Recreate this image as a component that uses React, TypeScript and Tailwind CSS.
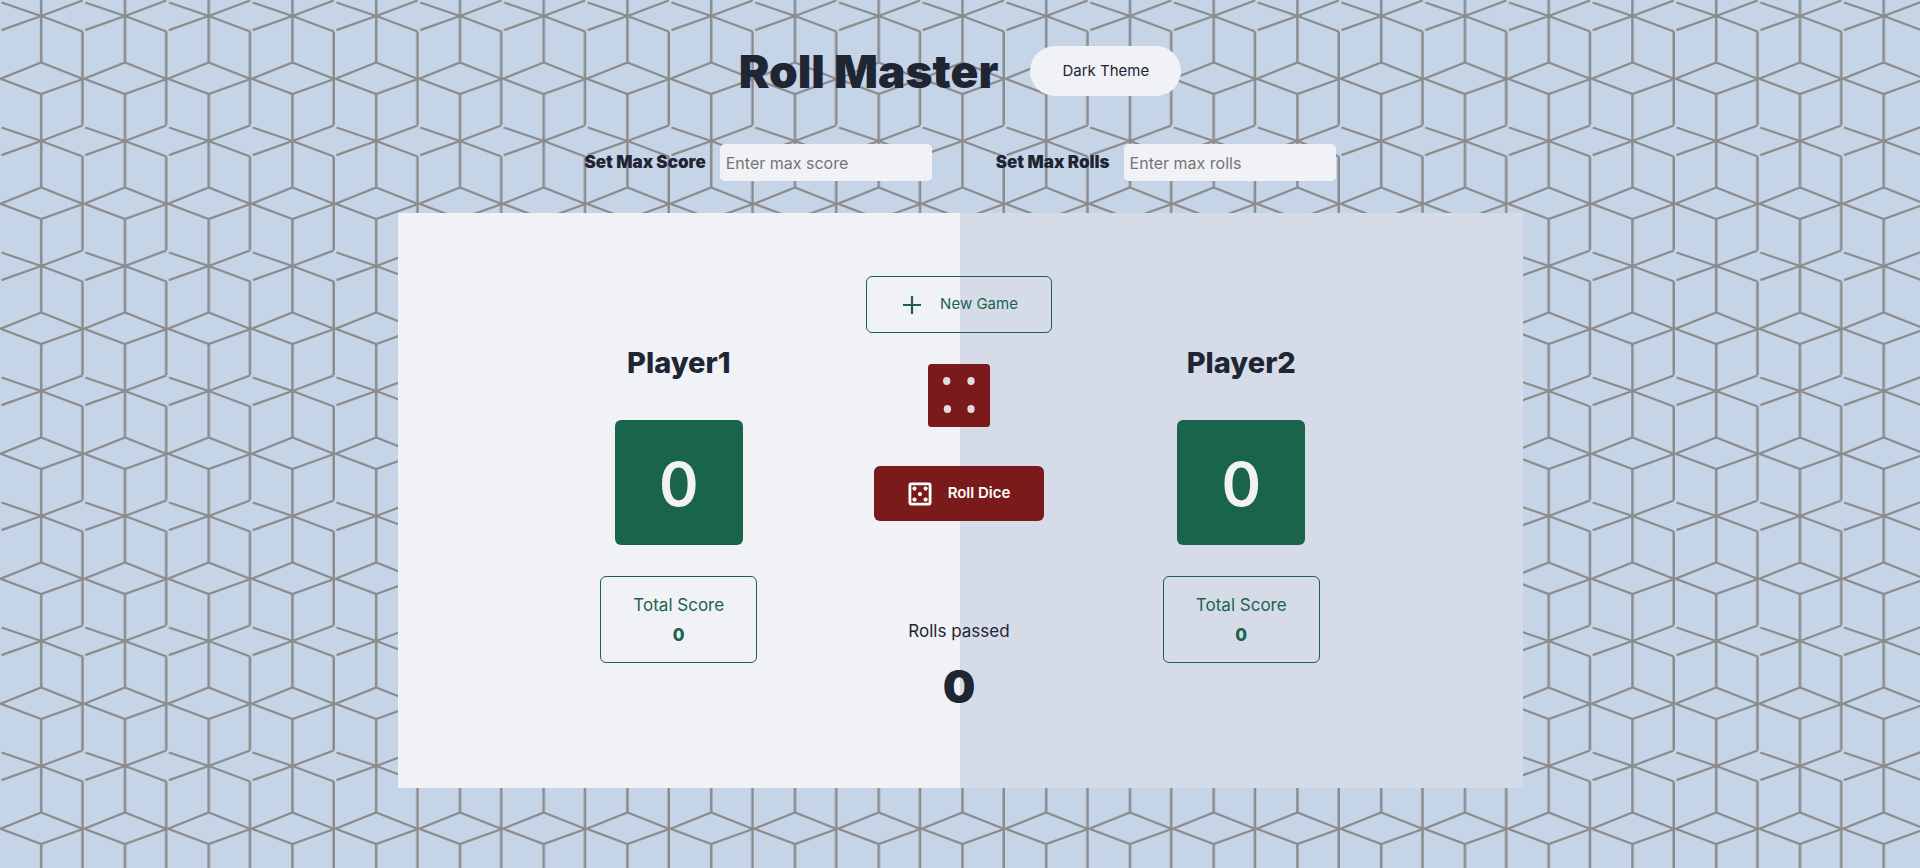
import React, { useState } from "react";

function CubeBackground() {
  return (
    <svg className="absolute inset-0 -z-10 h-full w-full" aria-hidden="true">
      <defs>
        <pattern id="cubes" width="83.75" height="125" patternUnits="userSpaceOnUse">
          <g fill="none" stroke="#8b8b8c" strokeWidth="2.5">
            <path d="M41.2 0V62.5M41.2 94V125M82.5 31.5V125" />
            <path d="M1.5 2.5L41.2 16L82.6 31.5M1.5 30.2L41.2 16L82.6 0.5" strokeWidth="2.3" />
            <path d="M0 79L41.2 62.5L83 79M0 78.5L41.2 94L83 79" strokeWidth="2.3" />
          </g>
        </pattern>
      </defs>
      <rect width="100%" height="100%" fill="url(#cubes)" />
    </svg>
  );
}

function SettingField({ id, label, placeholder }: { id: string; label: string; placeholder: string }) {
  return (
    <div className="flex items-center gap-3.5">
      <label htmlFor={id} className="text-[17px] font-black">
        {label}
      </label>
      <input
        id={id}
        type="text"
        placeholder={placeholder}
        className="h-[37px] w-[212px] rounded-[5px] bg-[#f0f2f6] px-1.5 text-base placeholder:text-[#757575]"
      />
    </div>
  );
}

function Player({ name, current, total, className }: { name: string; current: number; total: number; className: string }) {
  return (
    <section className={`row-start-1 flex flex-col items-center pt-[130px] ${className}`}>
      <h2 className="text-[29px] leading-10 font-extrabold">{name}</h2>
      <div className="mt-[37px] flex h-[125px] w-32 items-center justify-center rounded-md bg-[#1b644c] pt-0.5 text-[60px] font-semibold text-[#f0f2f6]">
        {current}
      </div>
      <div className="mt-[31px] flex h-[87px] w-[157px] flex-col items-center justify-center rounded-md border border-[#1b644c] text-[17px] leading-[30px] text-[#1b644c]">
        <p>Total Score</p>
        <p className="font-extrabold">{total}</p>
      </div>
    </section>
  );
}

function Die() {
  return (
    <svg className="mt-[31px] h-[63px] w-[62px]" viewBox="0 0 62 63" role="img" aria-label="Four">
      <rect width="62" height="63" rx="3.5" fill="#7a1a1a" />
      <g fill="#dddddf">
        <ellipse cx="18.7" cy="17" rx="3.7" ry="3.9" />
        <ellipse cx="43" cy="17" rx="3.7" ry="3.9" />
        <ellipse cx="19.4" cy="45" rx="3.7" ry="3.9" />
        <ellipse cx="43" cy="45" rx="3.7" ry="3.9" />
      </g>
    </svg>
  );
}

function DiceIcon() {
  return (
    <svg className="size-6" viewBox="0 0 24 24" aria-hidden="true">
      <rect x="1.9" y="1.9" width="20.2" height="20.2" rx="1" fill="none" stroke="currentColor" strokeWidth="2.8" />
      <g fill="currentColor">
        <circle cx="6.5" cy="6.6" r="2.1" />
        <circle cx="17.6" cy="6.6" r="2.1" />
        <circle cx="12" cy="12.1" r="2.1" />
        <circle cx="6.5" cy="17.6" r="2.1" />
        <circle cx="17.6" cy="17.6" r="2.1" />
      </g>
    </svg>
  );
}

export default function App() {
  const [rolls] = useState(0);

  return (
    <div className="relative isolate min-h-screen bg-[#c5d4e7] pb-20 font-['Inter',sans-serif] text-[#1f2533]">
      <CubeBackground />
      <header className="flex items-center justify-center gap-8 pt-[46px]">
        <h1 className="text-[46px] leading-[50px] font-black">Roll Master</h1>
        <button type="button" className="h-[50px] w-[151px] rounded-full bg-[#f0f2f6] text-[15px]">
          Dark Theme
        </button>
      </header>

      <div className="mt-12 flex flex-wrap items-center justify-center gap-16">
        <SettingField id="max-score" label="Set Max Score" placeholder="Enter max score" />
        <SettingField id="max-rolls" label="Set Max Rolls" placeholder="Enter max rolls" />
      </div>

      <main className="mx-auto mt-8 grid min-h-[575px] max-w-[1125px] grid-cols-4">
        <Player name="Player1" current={0} total={0} className="col-span-2 col-start-1 bg-[#f0f2f6]" />
        <Player name="Player2" current={0} total={0} className="col-span-2 col-start-3 bg-[#d5dce8]" />
        <section className="col-span-2 col-start-2 row-start-1 flex flex-col items-center pt-[63px] pr-0.5">
          <button
            type="button"
            className="flex h-[57px] w-[186px] items-center justify-center gap-4 rounded-md border border-[#1b644c] text-[15px] text-[#1b644c]"
          >
            <svg className="size-6" viewBox="0 0 24 24" aria-hidden="true">
              <path d="M12 3V21M3 12H21" stroke="currentColor" strokeWidth="2.2" />
            </svg>
            New Game
          </button>
          <Die />
          <button
            type="button"
            className="mt-[39px] flex h-[55px] w-[170px] items-center justify-center gap-4 rounded-md bg-[#7a1a1a] text-[15px] font-semibold text-white"
          >
            <DiceIcon />
            Roll Dice
          </button>
          <p className="mt-[95px] text-[17px] leading-[30px]">Rolls passed</p>
          <p className="mt-3 text-[46px] leading-[56px] font-black">{rolls}</p>
        </section>
      </main>
    </div>
  );
}
